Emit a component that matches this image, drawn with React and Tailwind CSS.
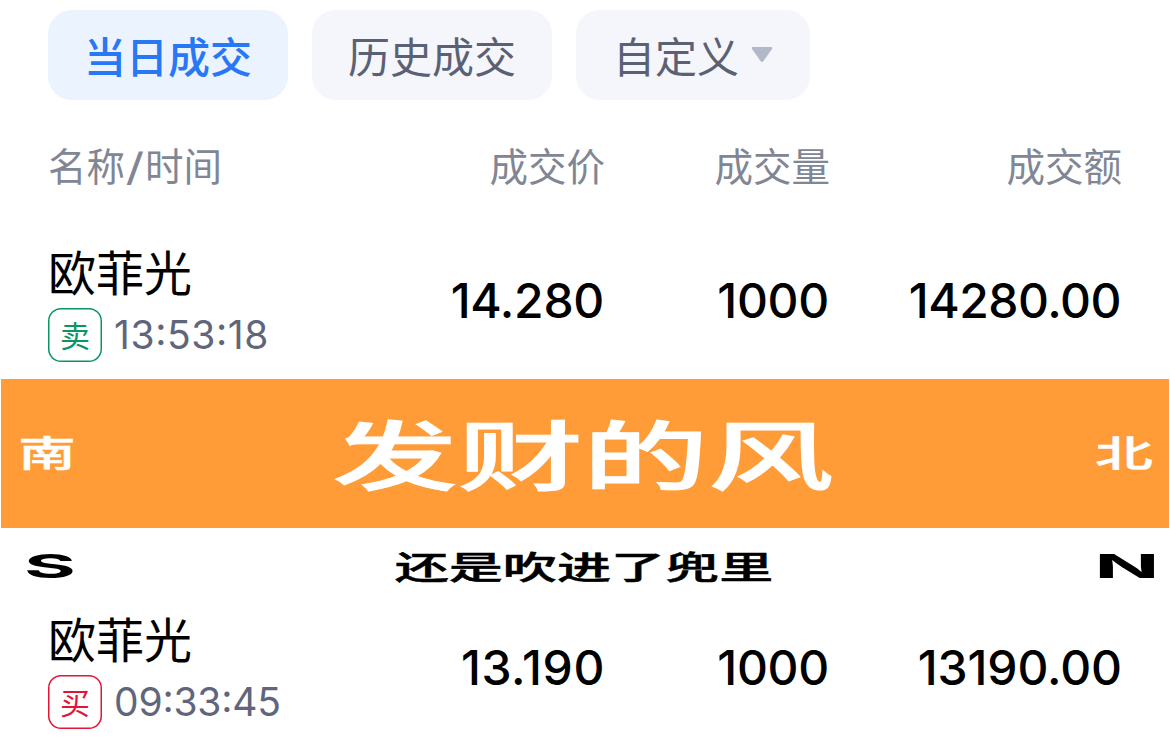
const trades = [
  {
    id: 1, name: '欧菲光', side: '卖', time: '13:53:18', price: '14.280', volume: '1000', amount: '14280.00',
    timeClass: 'tracking-[0.6px]', priceClass: '-tracking-[0.3px]', amountClass: '-tracking-[0.5px]',
  },
  {
    id: 2, name: '欧菲光', side: '买', time: '09:33:45', price: '13.190', volume: '1000', amount: '13190.00',
    timeClass: '-tracking-[0.2px]', priceClass: 'tracking-[0.6px] -mr-px', amountClass: '-tracking-[0.1px] -mr-px',
  },
];

const columns = 'grid grid-cols-[340px_216px_225px_292px] pl-12';

function Tab({ active, className, children }) {
  return (
    <button
      type="button"
      className={`h-[90px] pt-1.5 rounded-[24px] flex items-center justify-center text-[42px] leading-none ${
        active ? 'bg-[#ebf3fe] text-[#2878f5] font-medium' : 'bg-[#f4f6fb] text-[#5b6175]'
      } ${className}`}
    >
      {children}
    </button>
  );
}

function TradeRow({ trade }) {
  const sideClass = trade.side === '卖' ? 'text-[#0c9462]' : 'text-[#e31436]';
  const numberClass = 'h-[112px] flex items-center justify-end text-[48px] leading-none font-medium';

  return (
    <div className={`${columns} h-[134px] text-black`}>
      <div className="flex flex-col">
        <div className="h-[63px] pb-[5px] flex items-center text-[48px] leading-none">{trade.name}</div>
        <div className="flex items-center gap-3">
          <span className={`size-[54px] pt-px rounded-[13px] shadow-[inset_0_0_0_1.5px_currentColor] flex items-center justify-center text-[30px] leading-none ${sideClass}`}>
            {trade.side}
          </span>
          <span className={`pb-0.5 text-[39px] leading-none text-[#5f667b] [font-feature-settings:'case'] ${trade.timeClass}`}>
            {trade.time}
          </span>
        </div>
      </div>
      <div className={`${numberClass} ${trade.priceClass}`}>{trade.price}</div>
      <div className={`${numberClass} -tracking-[0.3px]`}>{trade.volume}</div>
      <div className={`${numberClass} ${trade.amountClass}`}>{trade.amount}</div>
    </div>
  );
}

// Banner entre las dos operaciones, con el texto estirado a lo ancho
function Banner() {
  return (
    <div className="h-[233px] leading-none">
      <div className="h-[149px] mx-px bg-[#ff9c38] text-white font-medium flex items-center justify-between px-[18px]">
        <span className="w-14 flex justify-center text-[36px] scale-x-[1.6] [-webkit-text-stroke:0.5px_white]">南</span>
        <span className="pt-1.5 text-[75px] scale-x-[1.67] -translate-x-[2px] whitespace-nowrap [-webkit-text-stroke:1px_white]">发财的风</span>
        <span className="w-14 flex justify-center text-[36px] scale-x-[1.6] translate-x-px [-webkit-text-stroke:0.5px_white]">北</span>
      </div>
      <div className="h-[77px] flex items-center justify-between px-[22px] text-black font-medium">
        <span className="w-14 flex justify-center text-[33px] font-bold scale-x-[2.4]">S</span>
        <span className="pt-0.5 text-[32px] scale-x-[1.69] -translate-x-px whitespace-nowrap [-webkit-text-stroke:0.5px_black]">还是吹进了兜里</span>
        <span className="w-14 flex justify-center text-[33px] font-bold scale-x-[2.6] translate-x-[7px]">N</span>
      </div>
    </div>
  );
}

export default function App() {
  return (
    <div className="w-[1170px] h-[752px] overflow-hidden bg-white pt-2.5 font-['Inter','Noto_Sans_CJK_SC',sans-serif]">
      <div className="flex gap-6 pl-12">
        <Tab active className="w-[240px]">当日成交</Tab>
        <Tab className="w-[240px]">历史成交</Tab>
        <Tab className="w-[234px] gap-3">
          自定义
          <svg width="22" height="16" viewBox="0 0 22 16" className="-mt-1.5 fill-[#b1b8c7]">
            <path d="M2 0h18q2 0 1 2l-8.500 12q-1.500 2-3 0L1 2Q0 0 2 0z" />
          </svg>
        </Tab>
      </div>

      <div className={`${columns} h-[145px] pb-2.5 items-center text-[38.5px] leading-none text-[#818695]`}>
        <div>名称<span className="inline-block px-[3px] scale-x-[1.35]">/</span>时间</div>
        <div className="text-right -mr-px">成交价</div>
        <div className="text-right -mr-px">成交量</div>
        <div className="text-right -mr-px">成交额</div>
      </div>

      <TradeRow trade={trades[0]} />
      <Banner />
      <TradeRow trade={trades[1]} />
    </div>
  );
}
